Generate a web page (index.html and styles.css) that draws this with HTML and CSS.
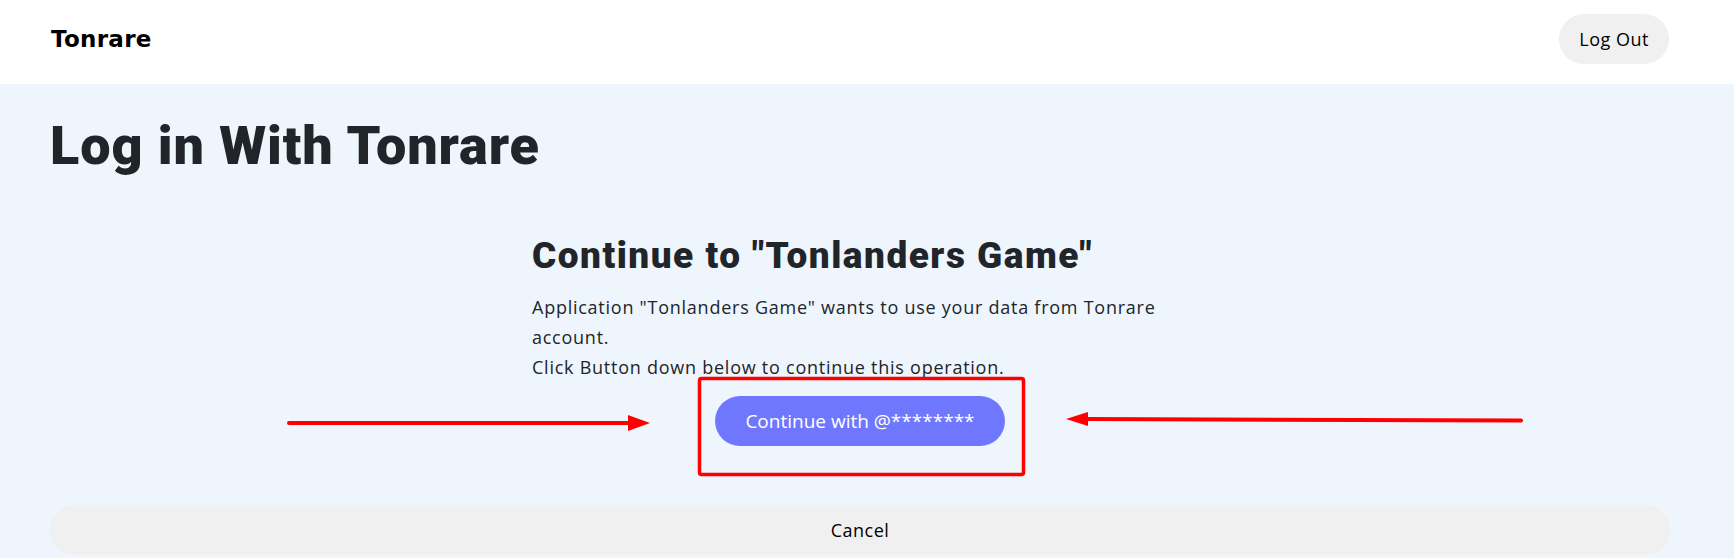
FILE: index.html
```html
<!DOCTYPE html>
<html lang="en">
<head>
<meta charset="utf-8">
<title>Log in With Tonrare</title>
<link rel="stylesheet" href="styles.css">
</head>
<body>
<header class="topbar">
  <a class="brand" href="#">Tonrare</a>
  <button class="btn-pill btn-logout" type="button">Log Out</button>
</header>
<main class="page">
  <h1 class="page-title">Log in With Tonrare</h1>
  <section class="consent">
    <h2 class="consent-title">Continue to "Tonlanders Game"</h2>
    <p class="consent-text">Application "Tonlanders Game" wants to use your data from Tonrare account.<br>Click Button down below to continue this operation.</p>
    <div class="consent-actions">
      <button class="btn-continue" type="button">Continue with @********</button>
    </div>
  </section>
  <button class="btn-pill btn-cancel" type="button">Cancel</button>
</main>
<svg class="annotations" width="1734" height="559" viewBox="0 0 1734 559" aria-hidden="true">
  <rect x="699.5" y="378.5" width="324" height="96" rx="2" fill="none" stroke="#ff0000" stroke-width="3.5"/>
  <line x1="289" y1="423" x2="630" y2="423" stroke="#ff0000" stroke-width="4" stroke-linecap="round"/>
  <polygon points="628,415 650,423 628,431" fill="#ff0000"/>
  <line x1="1086" y1="419" x2="1521" y2="420.5" stroke="#ff0000" stroke-width="4" stroke-linecap="round"/>
  <polygon points="1088,412 1066,419 1088,426" fill="#ff0000"/>
</svg>
</body>
</html>
```
FILE: styles.css
```css
* { box-sizing: border-box; }
html, body { margin: 0; padding: 0; }
body {
  width: 1734px;
  height: 559px;
  overflow: hidden;
  position: relative;
  background: #ffffff;
  font-family: "Open Sans", "Noto Sans", sans-serif;
  color: #212529;
}
.topbar {
  height: 84px;
  display: flex;
  align-items: center;
  justify-content: space-between;
  padding: 0 65px 6px 51px;
  background: #ffffff;
}
.brand {
  font-family: "DejaVu Sans", sans-serif;
  font-weight: 700;
  font-size: 23px;
  letter-spacing: 0.3px;
  color: #000000;
  text-decoration: none;
}
.btn-pill {
  border: none;
  background: #f0f0f0;
  color: #000000;
  font-family: "Open Sans", "Noto Sans", sans-serif;
  font-size: 18px;
  letter-spacing: 0.5px;
  border-radius: 25px;
  height: 50px;
  cursor: pointer;
}
.btn-logout {
  padding: 0 20px;
}
.page {
  background: #eef5fd;
  padding: 30px 64px 3px 50px;
}
.page-title {
  margin: 0;
  font-family: "Roboto", sans-serif;
  font-weight: 900;
  font-size: 54px;
  line-height: 64px;
  letter-spacing: 0.9px;
  color: #212529;
}
.consent {
  width: 656px;
  margin: 56px auto 0;
}
.consent-title {
  margin: 0;
  font-family: "Roboto", sans-serif;
  font-weight: 900;
  font-size: 37px;
  line-height: 44px;
  letter-spacing: 1.5px;
}
.consent-text {
  margin: 14px 0 0;
  font-size: 18px;
  line-height: 30px;
  letter-spacing: 0.75px;
}
.consent-actions {
  display: flex;
  justify-content: center;
  margin-top: 14px;
}
.btn-continue {
  border: none;
  background: #7077ff;
  color: #ffffff;
  font-family: "Open Sans", "Noto Sans", sans-serif;
  font-size: 19px;
  height: 50px;
  padding: 0 30px;
  border-radius: 25px;
  cursor: pointer;
}
.btn-cancel {
  display: block;
  width: 100%;
  margin-top: 59px;
}
.annotations {
  position: absolute;
  top: 0;
  left: 0;
  pointer-events: none;
}
```
